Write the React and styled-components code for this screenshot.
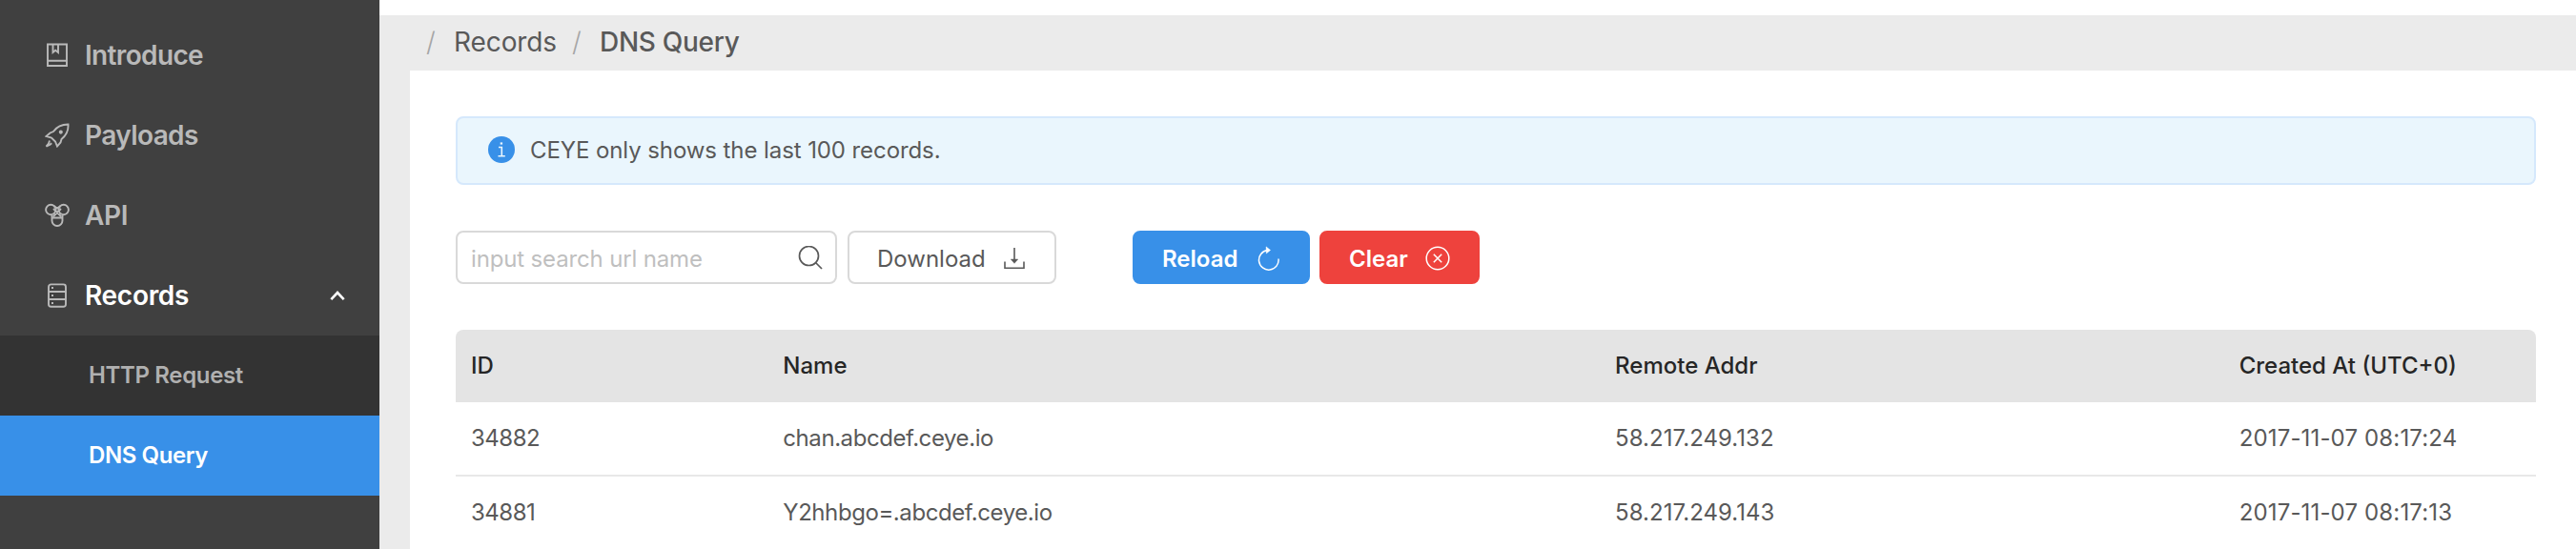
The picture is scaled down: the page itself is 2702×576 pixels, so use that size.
import React from "react";
import styled, { createGlobalStyle } from "styled-components";

const GlobalStyle = createGlobalStyle`
  * { box-sizing: border-box; }
  body {
    margin: 0;
    background: #fff;
    color: #595959;
    font-family: Inter, "Liberation Sans", sans-serif;
    font-size: 24px;
    overflow: hidden;
  }
`;

const Page = styled.div`
  display: flex;
  height: 576px;
  overflow: hidden;
`;

const Sidebar = styled.nav`
  width: 398px;
  flex: none;
  padding-top: 16px;
  background: #404040;
`;

const MenuItem = styled.div`
  display: flex;
  align-items: center;
  height: 84px;
  padding: 0 36px 0 47px;
  color: ${(p) => (p.$open ? "#fff" : "#b9b9b9")};
  font-size: 28px;
  font-weight: 600;
  letter-spacing: ${(p) => p.$track || 0}px;
`;

const MenuIcon = styled.svg`
  flex: none;
  width: 26px;
  height: 26px;
  margin-right: 16px;
  fill: none;
  stroke: #b9b9b9;
  stroke-width: 1.9;
`;

const Caret = styled.svg`
  width: 16px;
  height: 12px;
  margin-left: auto;
  fill: none;
  stroke: #fff;
  stroke-width: 2.6;
`;

const SubItem = styled.div`
  display: flex;
  align-items: center;
  height: 84px;
  padding-left: 93px;
  padding-bottom: 1px;
  font-weight: 600;
  letter-spacing: ${(p) => p.$track || 0}px;
  color: ${(p) => (p.$active ? "#fff" : "#b0b0b0")};
  background: ${(p) => (p.$active ? "#3890e8" : "#333")};
`;

const Main = styled.main`
  flex: 1;
  min-width: 0;
  display: flex;
  flex-direction: column;
  margin-top: 16px;
  padding-left: 32px;
  background: #ebebeb;
`;

const Breadcrumb = styled.div`
  display: flex;
  flex: none;
  align-items: center;
  gap: 16px;
  height: 58px;
  padding-left: 17px;
  padding-bottom: 2px;
  font-size: 28px;
  color: #595959;
`;

const Slash = styled.span`
  color: #a6a6a6;
  width: 13px;
  font-weight: 300;
`;

const Crumb = styled.span`
  font-weight: ${(p) => (p.$current ? 500 : 400)};
  letter-spacing: ${(p) => (p.$current ? -0.3 : -0.1)}px;
`;

const Panel = styled.section`
  flex: 1;
  padding: 48px 42px 0 48px;
  background: #fff;
`;

const Alert = styled.div`
  display: flex;
  align-items: center;
  height: 72px;
  padding: 0 0 2px 32px;
  border: 2px solid #d5e8fc;
  border-radius: 8px;
  background: #eaf6fd;
  letter-spacing: -0.09px;
`;

const InfoIcon = styled.svg`
  width: 28px;
  height: 28px;
  margin-right: 16px;
`;

const Toolbar = styled.div`
  display: flex;
  align-items: center;
  height: 56px;
  margin: 48px 0;
`;

const SearchBox = styled.label`
  display: flex;
  align-items: center;
  justify-content: space-between;
  width: 400px;
  height: 56px;
  padding: 2px 13px 0 14px;
  border: 2px solid #d9d9d9;
  border-radius: 8px;
`;

const SearchInput = styled.input`
  width: 300px;
  padding: 0;
  border: 0;
  outline: 0;
  background: transparent;
  font: inherit;
  letter-spacing: -0.15px;
  &::placeholder { color: #bfbfbf; opacity: 1; }
`;

const tones = {
  plain: { bg: "#fff", border: "#d9d9d9", text: "#595959" },
  primary: { bg: "#3890e8", border: "#3890e8", text: "#fff" },
  danger: { bg: "#ee423d", border: "#ee423d", text: "#fff" },
};

const Button = styled.button`
  display: flex;
  align-items: center;
  justify-content: space-between;
  width: ${(p) => p.$width}px;
  height: 56px;
  margin-left: ${(p) => p.$gap}px;
  padding: 2px 29px 0;
  border: 2px solid ${(p) => tones[p.$tone].border};
  border-radius: 8px;
  background: ${(p) => tones[p.$tone].bg};
  color: ${(p) => tones[p.$tone].text};
  font: inherit;
  font-weight: ${(p) => (p.$tone === "plain" ? 400 : 600)};
  letter-spacing: 0;
`;

const ActionIcon = styled.svg`
  flex: none;
  width: 26px;
  height: 26px;
  fill: none;
  stroke: currentColor;
  stroke-width: ${(p) => p.$stroke || 1.7};
`;

const Table = styled.div`
  display: grid;
  grid-template-columns: 15fr 40fr 30fr 15fr;
`;

const HeadCell = styled.div`
  height: 76px;
  padding-left: 16px;
  line-height: 76px;
  background: #e4e4e4;
  color: #262626;
  font-weight: 450;
  &:first-child { border-top-left-radius: 8px; }
  &:nth-child(4) { border-top-right-radius: 8px; }
`;

const Cell = styled.div`
  height: 78px;
  padding-left: 16px;
  line-height: 76px;
  border-bottom: 2px solid #e8e8e8;
  letter-spacing: ${(p) => p.$track || 0}px;
  white-space: nowrap;
`;

const records = [
  ["34882", "chan.abcdef.ceye.io", "58.217.249.132", "2017-11-07 08:17:24"],
  ["34881", "Y2hhbgo=.abcdef.ceye.io", "58.217.249.143", "2017-11-07 08:17:13"],
];
const cellTracking = [-0.5, -0.43, 0.05, 0.15];

export default function App() {
  return (
    <Page>
      <GlobalStyle />
      <Sidebar>
        <MenuItem $track={-0.65}>
          <MenuIcon viewBox="0 0 26 26">
            <path d="M3 1.5H23V24H3ZM3 18.8H23M8.5 1.5V10L11.2 7.8L14 10V1.5" />
          </MenuIcon>
          Introduce
        </MenuItem>
        <MenuItem $track={-0.6}>
          <MenuIcon viewBox="0 0 26 26">
            <path d="M24.5 1.5C17 1.5 12.5 4 9 9L5.5 10.5L1.5 14L7 15.5L11 19.5L13 24.5L16.5 20.5L17.5 17C23 12.5 25 8.5 24.5 1.5ZM5 18.5L4 21.5L1.5 24.7L5.5 22.8L7.2 21.2" />
            <circle cx="16.8" cy="9.6" r="1.1" />
          </MenuIcon>
          Payloads
        </MenuItem>
        <MenuItem $track={-0.4}>
          <MenuIcon viewBox="0 0 26 26">
            <circle cx="6.3" cy="7" r="5.2" />
            <circle cx="19.7" cy="7" r="5.2" />
            <path d="M7.5 13V18.5A5.5 5.5 0 0 0 18.5 18.5V13M9 6L17 14M17 6L9 14M8 15.5H18M9.5 3L13 5.5L16.5 3" />
          </MenuIcon>
          API
        </MenuItem>
        <MenuItem $open $track={-0.3}>
          <MenuIcon viewBox="0 0 26 26">
            <rect x="4" y="1.4" width="18" height="23.4" rx="2.5" />
            <path d="M4 9H22M4 17H22M7 5H9M7 13H9M7 21H9" />
          </MenuIcon>
          Records
          <Caret viewBox="0 0 16 12">
            <path d="M1.3 10.2L8 3L14.7 10.2" />
          </Caret>
        </MenuItem>
        <SubItem $track={-0.35}>HTTP Request</SubItem>
        <SubItem $active $track={-0.4}>DNS Query</SubItem>
      </Sidebar>
      <Main>
        <Breadcrumb>
          <Slash>/</Slash>
          <Crumb>Records</Crumb>
          <Slash>/</Slash>
          <Crumb $current>DNS Query</Crumb>
        </Breadcrumb>
        <Panel>
          <Alert>
            <InfoIcon viewBox="0 0 28 28">
              <circle cx="14" cy="14" r="14" fill="#3890e8" />
              <path d="M11 11.5H14.3V20.3M10.5 20.7H17.8" fill="none" stroke="#eaf6fd" strokeWidth="1.6" />
              <rect x="12.7" y="6.4" width="2.4" height="2.2" fill="#eaf6fd" />
            </InfoIcon>
            CEYE only shows the last 100 records.
          </Alert>
          <Toolbar>
            <SearchBox>
              <SearchInput placeholder="input search url name" />
              <ActionIcon viewBox="0 0 26 26">
                <circle cx="11.5" cy="10.5" r="10" />
                <path d="M18.5 17.5L25 24" />
              </ActionIcon>
            </SearchBox>
            <Button $tone="plain" $width={219} $gap={11}>
              Download
              <ActionIcon viewBox="0 0 26 26" $stroke={1.6}>
                <path d="M13 2V17M3 16.5V23.3H23V16.5" />
                <path d="M9.3 14L13 18.3L16.7 14Z" fill="currentColor" strokeWidth="0.5" />
              </ActionIcon>
            </Button>
            <Button $tone="primary" $width={186} $gap={80}>
              Reload
              <ActionIcon viewBox="0 0 26 26" $stroke={1.5}>
                <path d="M12.5 4.6A10.3 10.3 0 1 0 24 13.5" />
                <path d="M11 0.8L15.6 4.4L11.3 8Z" fill="currentColor" strokeWidth="0.4" />
              </ActionIcon>
            </Button>
            <Button $tone="danger" $width={168} $gap={10}>
              Clear
              <ActionIcon viewBox="0 0 26 26" $stroke={1.5}>
                <circle cx="13" cy="13" r="11.8" />
                <path d="M8.8 8.8L17.2 17.2M17.2 8.8L8.8 17.2" />
              </ActionIcon>
            </Button>
          </Toolbar>
          <Table>
            <HeadCell>ID</HeadCell>
            <HeadCell>Name</HeadCell>
            <HeadCell>Remote Addr</HeadCell>
            <HeadCell>Created At (UTC+0)</HeadCell>
            {records.map((row) =>
              row.map((value, i) => (
                <Cell key={row[0] + i} $track={cellTracking[i]}>{value}</Cell>
              ))
            )}
          </Table>
        </Panel>
      </Main>
    </Page>
  );
}
